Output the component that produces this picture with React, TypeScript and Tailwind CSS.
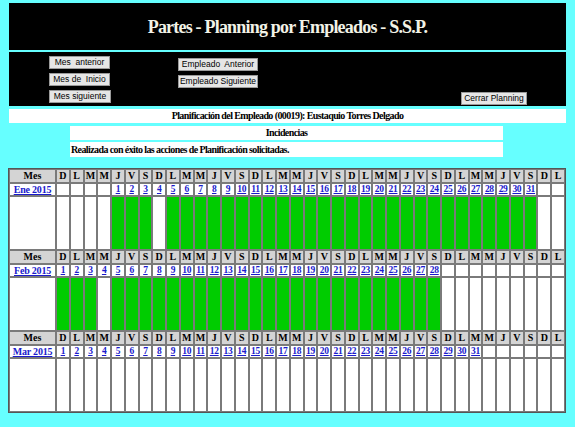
import React from 'react';

const LETTERS = ['D', 'L', 'M', 'M', 'J', 'V', 'S'];
const COLS = 37;

const MONTHS = [
  { name: 'Ene 2015', offset: 4, days: 31, green: (d: number) => d !== 4 },
  { name: 'Feb 2015', offset: 0, days: 28, green: (d: number) => d !== 4 },
  { name: 'Mar 2015', offset: 0, days: 31, green: () => false },
];

const serif = "font-[family-name:'Liberation_Serif',serif]";

function Btn({ label, w }: { label: string; w: string }) {
  return (
    <button
      type="button"
      className={`${w} h-[13px] bg-[#e6e6e6] border border-[#9a9a9a] text-[8.5px] leading-[11px] text-black font-[family-name:'Liberation_Sans',sans-serif] whitespace-pre text-center`}
    >
      {label}
    </button>
  );
}

function MonthBlock({ m }: { m: (typeof MONTHS)[number] }) {
  const cols = Array.from({ length: COLS }, (_, i) => i);
  return (
    <>
      {/* cabecera */}
      <div className="h-[12px] bg-[#d4d4d4] flex items-center justify-center text-[10px] font-bold leading-none">Mes</div>
      {cols.map(i => (
        <div key={`h${i}`} className="h-[12px] bg-[#d4d4d4] flex items-center justify-center text-[10px] font-bold leading-none">
          {LETTERS[i % 7]}
        </div>
      ))}

      {/* fechas */}
      <div className="h-[11px] bg-white flex items-center justify-center">
        <a href="#" className="text-[10px] font-bold leading-none underline text-[#1a1acc] tracking-[-0.2px]">{m.name}</a>
      </div>
      {cols.map(i => {
        const d = i - m.offset + 1;
        const has = d >= 1 && d <= m.days;
        return (
          <div key={`d${i}`} className="h-[11px] bg-white flex items-center justify-center overflow-visible">
            {has && (
              <a href="#" className="text-[9.5px] font-bold leading-none underline text-[#1a1acc] tracking-[-0.3px]">{d}</a>
            )}
          </div>
        );
      })}

      {/* planning */}
      <div className="h-[52px] bg-white" />
      {cols.map(i => {
        const d = i - m.offset + 1;
        const on = d >= 1 && d <= m.days && m.green(d);
        return <div key={`p${i}`} className={on ? 'h-[52px] bg-[#00cc00]' : 'h-[52px] bg-white'} />;
      })}
    </>
  );
}

export default function App() {
  return (
    <div className={`w-[575px] h-[427px] bg-[#66ffff] px-[9px] pt-[3px] ${serif} text-black overflow-hidden`}>
      {/* titulo */}
      <div className="h-[47px] bg-black flex items-center justify-center">
        <h1 className="text-[18px] font-bold text-[#f2f2e6] leading-none tracking-[-0.8px]">Partes - Planning por Empleados - S.S.P.</h1>
      </div>

      {/* botonera */}
      <div className="mt-[2px] h-[54px] bg-black flex flex-col gap-[3px] pt-[3px] pl-[40px]">
        <div className="flex items-center h-[14px]">
          <Btn label="Mes  anterior" w="w-[61px]" />
          <div className="ml-[68px]"><Btn label="Empleado  Anterior" w="w-[80px]" /></div>
        </div>
        <div className="flex items-center h-[14px]">
          <Btn label="Mes de  Inicio" w="w-[61px]" />
          <div className="ml-[68px]"><Btn label="Empleado Siguiente" w="w-[80px]" /></div>
        </div>
        <div className="flex items-center h-[14px]">
          <Btn label="Mes siguiente" w="w-[62px]" />
          <div className="ml-[350px]"><Btn label="Cerrar Planning" w="w-[66px]" /></div>
        </div>
      </div>

      {/* empleado */}
      <div className="mt-[3px] h-[14px] bg-white flex items-center justify-center text-[10px] tracking-[-0.6px] font-bold leading-none">
        Planificación del Empleado (00019): Eustaquio Torres Delgado
      </div>

      <div className="ml-[61px] w-[433px] mt-[3px] h-[14px] bg-white flex items-center justify-center text-[10px] tracking-[-0.6px] font-bold leading-none">
        Incidencias
      </div>
      <div className="ml-[61px] w-[433px] mt-[2px] h-[15px] bg-white flex items-center pl-[1px] text-[10px] tracking-[-0.6px] font-bold leading-none">
        Realizada con éxito las acciones de Planificación solicitadas.
      </div>

      {/* calendario */}
      <div className="mt-[11px] w-[558px] -ml-[1px] bg-[#7a7a7a] border border-[#555555] p-[1px] grid grid-cols-[45px_repeat(37,minmax(0,1fr))] gap-[2px]">
        {MONTHS.map(m => (
          <MonthBlock key={m.name} m={m} />
        ))}
      </div>
    </div>
  );
}
